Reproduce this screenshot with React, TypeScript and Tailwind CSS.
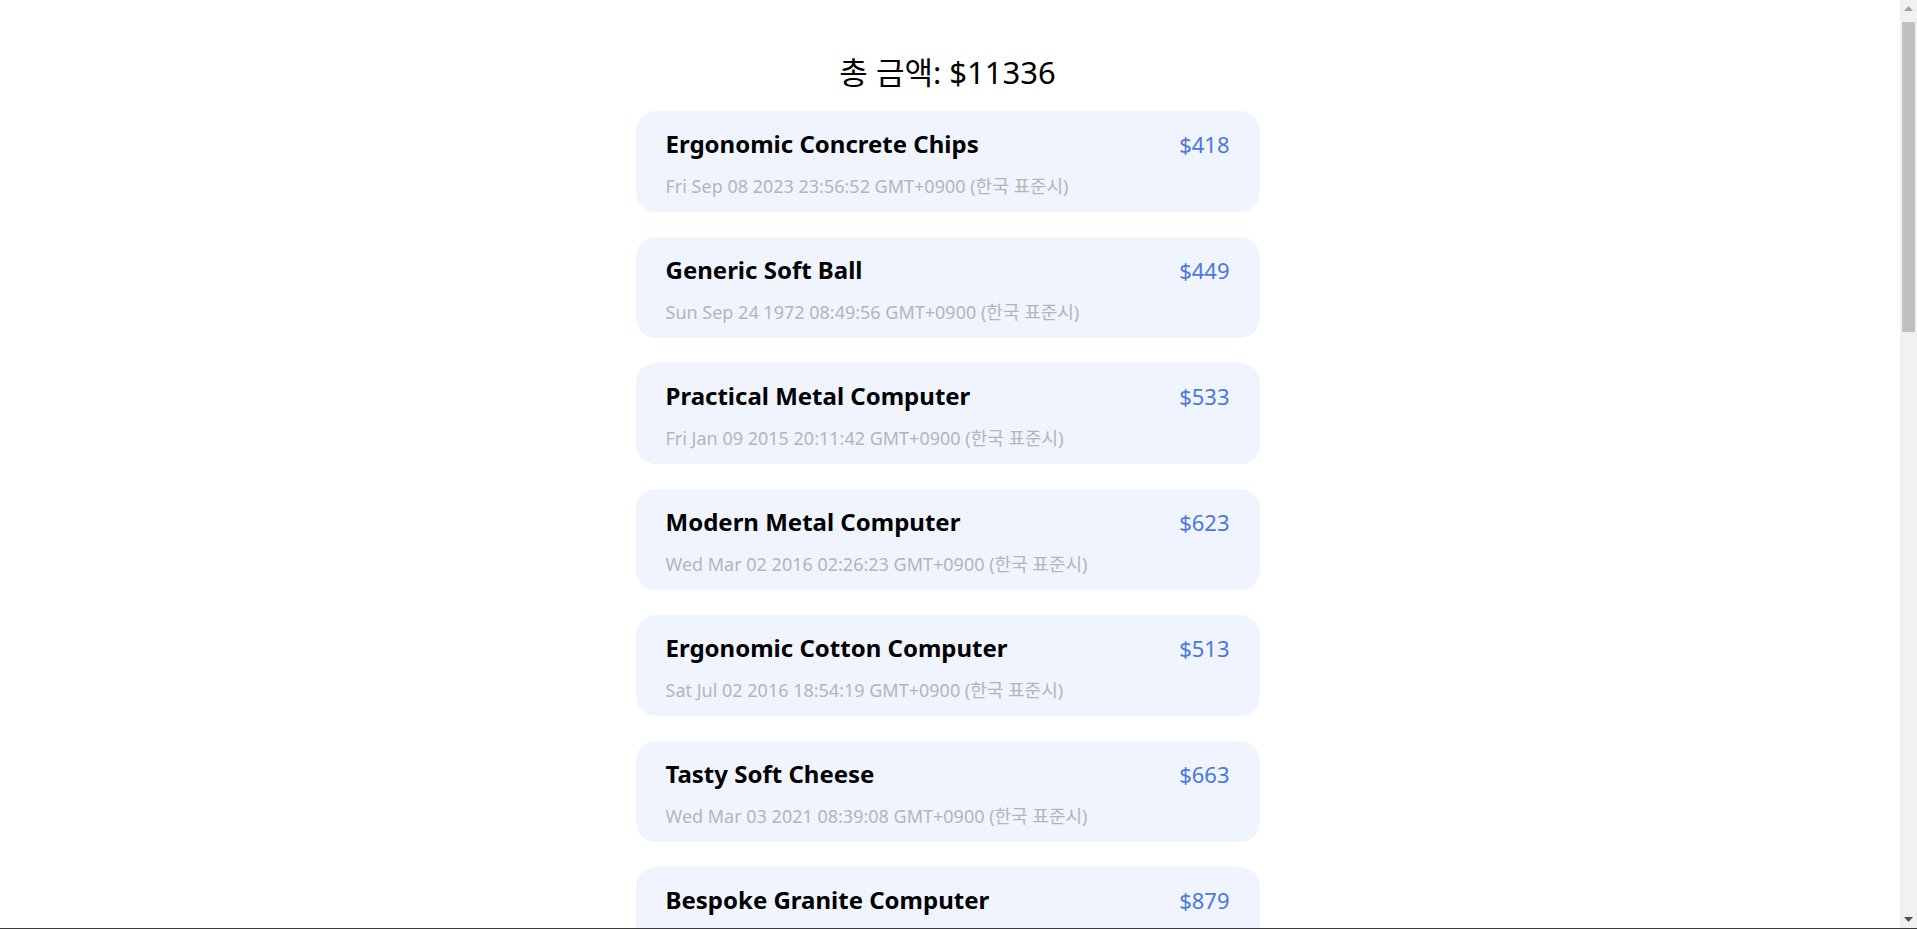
import React from 'react'

type Purchase = {
  id: number
  name: string
  price: number
  date: string
}

const purchases: Purchase[] = [
  { id: 1, name: 'Ergonomic Concrete Chips', price: 418, date: 'Fri Sep 08 2023 23:56:52 GMT+0900 (한국 표준시)' },
  { id: 2, name: 'Generic Soft Ball', price: 449, date: 'Sun Sep 24 1972 08:49:56 GMT+0900 (한국 표준시)' },
  { id: 3, name: 'Practical Metal Computer', price: 533, date: 'Fri Jan 09 2015 20:11:42 GMT+0900 (한국 표준시)' },
  { id: 4, name: 'Modern Metal Computer', price: 623, date: 'Wed Mar 02 2016 02:26:23 GMT+0900 (한국 표준시)' },
  { id: 5, name: 'Ergonomic Cotton Computer', price: 513, date: 'Sat Jul 02 2016 18:54:19 GMT+0900 (한국 표준시)' },
  { id: 6, name: 'Tasty Soft Cheese', price: 663, date: 'Wed Mar 03 2021 08:39:08 GMT+0900 (한국 표준시)' },
  { id: 7, name: 'Bespoke Granite Computer', price: 879, date: 'Tue Nov 14 1995 11:02:37 GMT+0900 (한국 표준시)' },
  { id: 8, name: 'Handcrafted Fresh Shoes', price: 512, date: 'Mon Apr 17 2006 14:20:05 GMT+0900 (한국 표준시)' },
  { id: 9, name: 'Intelligent Wooden Chair', price: 601, date: 'Thu Dec 01 1988 06:45:12 GMT+0900 (한국 표준시)' },
  { id: 10, name: 'Sleek Rubber Gloves', price: 487, date: 'Sat Feb 20 2010 19:33:48 GMT+0900 (한국 표준시)' },
  { id: 11, name: 'Licensed Frozen Pizza', price: 735, date: 'Sun Jun 11 2000 22:08:31 GMT+0900 (한국 표준시)' },
  { id: 12, name: 'Rustic Plastic Table', price: 398, date: 'Wed Oct 05 1983 09:17:26 GMT+0900 (한국 표준시)' },
  { id: 13, name: 'Gorgeous Steel Keyboard', price: 652, date: 'Fri Aug 27 2004 03:51:09 GMT+0900 (한국 표준시)' },
  { id: 14, name: 'Refined Cotton Hat', price: 544, date: 'Tue May 19 1992 16:40:55 GMT+0900 (한국 표준시)' },
  { id: 15, name: 'Awesome Granite Car', price: 820, date: 'Mon Jan 23 2017 12:05:44 GMT+0900 (한국 표준시)' },
  { id: 16, name: 'Incredible Wooden Mouse', price: 461, date: 'Thu Jul 30 1998 07:29:18 GMT+0900 (한국 표준시)' },
  { id: 17, name: 'Small Fresh Towels', price: 579, date: 'Sat Sep 12 2009 21:14:02 GMT+0900 (한국 표준시)' },
  { id: 18, name: 'Unbranded Metal Bike', price: 703, date: 'Sun Mar 08 1981 10:56:37 GMT+0900 (한국 표준시)' },
  { id: 19, name: 'Fantastic Soft Sausages', price: 366, date: 'Wed Nov 16 2011 05:38:21 GMT+0900 (한국 표준시)' },
  { id: 20, name: 'Generic Concrete Bacon', price: 400, date: 'Fri Feb 02 2018 17:22:50 GMT+0900 (한국 표준시)' },
]

// window scrollbar as it shows in the screenshot
function ScrollBar() {
  return (
    <div className="flex w-[17px] shrink-0 flex-col items-center bg-[#f1f1f1]">
      <div className="flex h-[17px] w-full items-center justify-center">
        <svg width="9" height="5" viewBox="0 0 9 5">
          <polygon points="4.5,0 9,5 0,5" fill="#a3a3a3" />
        </svg>
      </div>
      <div className="mt-[5px] h-[310px] w-[13px] bg-[#c1c1c1]" />
      <div className="flex-1" />
      <div className="flex h-[17px] w-full items-center justify-center">
        <svg width="9" height="5" viewBox="0 0 9 5">
          <polygon points="0,0 9,0 4.5,5" fill="#505050" />
        </svg>
      </div>
    </div>
  )
}

export default function App() {
  const total = purchases.reduce((sum, p) => sum + p.price, 0)

  return (
    <div className="flex h-screen flex-col overflow-hidden bg-white font-['Noto_Sans','Noto_Sans_CJK_KR',sans-serif] text-black">
      <div className="flex min-h-0 flex-1">
        <main className="min-w-0 flex-1 overflow-hidden pr-[5px]">
          <div className="mx-auto flex w-[624px] flex-col pt-[50px] pb-10">
            <h1 className="mb-[17px] text-center text-[31px] leading-[44px] font-normal">총 금액: ${total}</h1>

            <ul className="flex flex-col gap-[25px]">
              {purchases.map(p => (
                <li key={p.id} className="flex h-[101px] flex-col rounded-[20px] bg-[#f0f4ff] px-[30px] pt-[17px]">
                  <div className="flex items-center justify-between">
                    <span className="text-[24px] leading-[32px] font-bold">{p.name}</span>
                    <span className="text-[22px] leading-[32px] text-[#4a78de]">${p.price}</span>
                  </div>
                  <span className="mt-[13px] text-[18px] leading-[26px] text-[#b5b5b5]">{p.date}</span>
                </li>
              ))}
            </ul>
          </div>
        </main>
        <ScrollBar />
      </div>
      <div className="h-px shrink-0 bg-[#3c3c3c]" />
    </div>
  )
}
